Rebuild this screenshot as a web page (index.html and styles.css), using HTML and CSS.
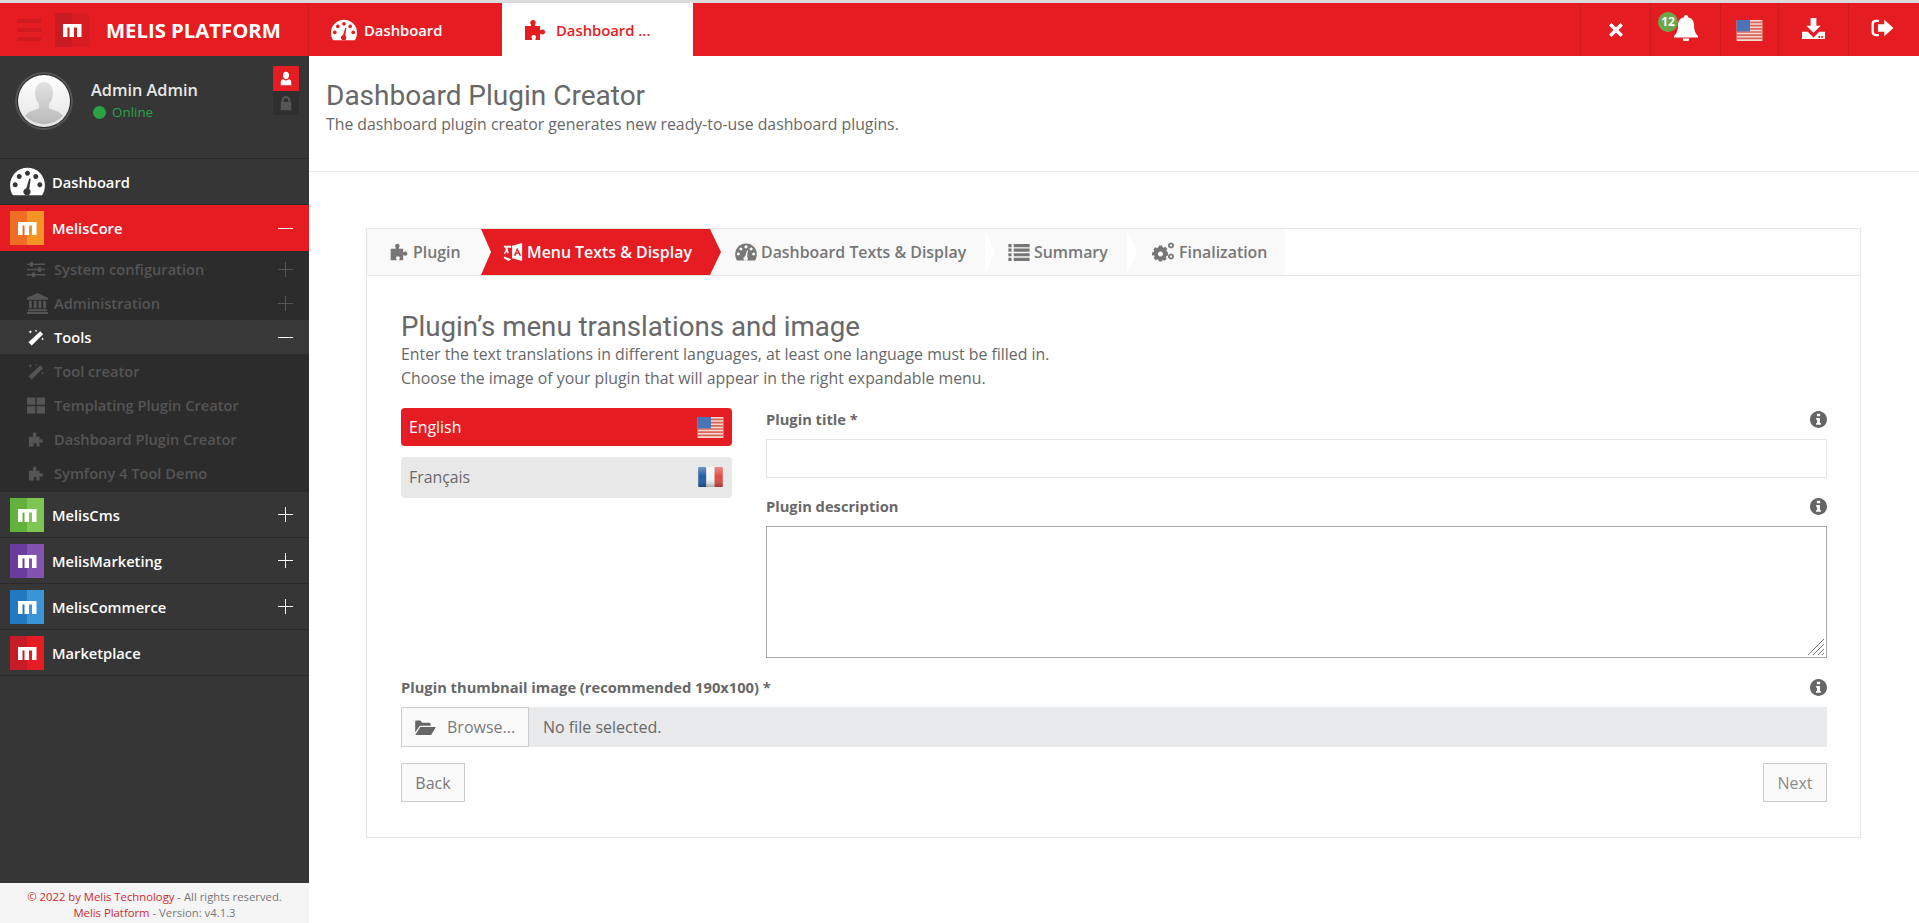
FILE: index.html
```html
<!DOCTYPE html>
<html lang="en">
<head>
  <meta charset="UTF-8" />
  <title>Melis Platform</title>
  <link rel="stylesheet" href="styles.css">
</head>
<body>

  <!-- Icon set -->
  <svg class="icon-defs" aria-hidden="true">
    <defs>
      <linearGradient id="flag-gloss" x1="0" y1="0" x2="0" y2="1">
        <stop offset="0" stop-color="#fff" stop-opacity=".35"/>
        <stop offset=".5" stop-color="#fff" stop-opacity="0"/>
        <stop offset="1" stop-color="#000" stop-opacity=".3"/>
      </linearGradient>
    </defs>
    <symbol id="i-gauge" viewBox="0 0 24 20">
      <path fill-rule="evenodd" d="M2 19.500C.7 17.600 0 15 0 12.500a12 12 0 0 1 24 0c0 2.500-.7 5.100-2 7zM12 2.600a1.700 1.700 0 1 0 .01 0zM6.300 4.900a1.700 1.700 0 1 0 .01 0zM17.700 4.900a1.700 1.700 0 1 0 .01 0zM3.500 10.500a1.700 1.700 0 1 0 .01 0zM20.500 10.500a1.700 1.700 0 1 0 .01 0zM13.200 8l-2 6.700a2.500 2.500 0 1 0 2 .5l1-7z"/>
    </symbol>
    <symbol id="i-puzzle" viewBox="0 0 24 24">
      <path d="M2 8h6V6.500C6.800 5 7 2 10 2s3.200 3 2 4.500V8h5v4.500c1.500-1.500 5-1.500 5 1.500s-3.500 3-5 1.500V22h-4.500v-1.500c1-1.500.5-3.500-1.700-3.500s-3 2-1.800 3.500V22H2z"/>
    </symbol>
    <symbol id="i-melis" viewBox="0 0 34 34">
      <path d="M8 11h18.500v13h-4.500v-9.500h-3V24h-4.500v-9.500h-2V24H8z"/>
    </symbol>
    <symbol id="i-times" viewBox="0 0 16 16">
      <path d="M3.500 1L8 5.500 12.500 1 15 3.500 10.500 8l4.500 4.500-2.500 2.500L8 10.500 3.500 15 1 12.500 5.500 8 1 3.500z"/>
    </symbol>
    <symbol id="i-bell" viewBox="0 0 24 26">
      <path d="M12 0a2 2 0 0 1 2 2.200c4 .9 6 4 6 8 0 5 1.200 8.300 4 10.800v1.500H0V21c2.800-2.500 4-5.800 4-10.800 0-4 2-7.100 6-8A2 2 0 0 1 12 0zM8.800 23.500h6.400a3.200 3.200 0 0 1-6.400 0z"/>
    </symbol>
    <symbol id="i-download" viewBox="0 0 24 24">
      <path fill-rule="evenodd" d="M9 1h6v8h4.500L12 16.500 4.500 9H9zM0 15.500h6l6 6 6-6h6V23H0zM18 19.800a1 1 0 1 0 .01 0zM21 19.800a1 1 0 1 0 .01 0z"/>
    </symbol>
    <symbol id="i-logout" viewBox="0 0 24 22">
      <path d="M8 2v2.500H5A2.500 2.500 0 0 0 2.500 7v8A2.500 2.500 0 0 0 5 17.500h3V20H4.500A4.500 4.500 0 0 1 0 15.500v-9A4.500 4.500 0 0 1 4.500 2zM14 2l10 9-10 9v-5H7V7h7z"/>
    </symbol>
    <symbol id="i-user" viewBox="0 0 16 20">
      <path d="M8 1c2.500 0 4 2 4 4.500S10.500 11 8 11 4 8 4 5.500 5.500 1 8 1zM4 11c1 1 2.500 1.500 4 1.500s3-.5 4-1.500c2 .3 3 2 3 5v3H1v-3c0-3 1-4.700 3-5z"/>
    </symbol>
    <symbol id="i-lock" viewBox="0 0 16 20">
      <path fill-rule="evenodd" d="M2 8V6a6 6 0 0 1 12 0v2h1v11H1V8zM5 8h6V6a3 3 0 0 0-6 0z"/>
    </symbol>
    <symbol id="i-sliders" viewBox="0 0 18 16">
      <path d="M0 2h3V.500h3V2h12v1.500H6V5H3V3.500H0zM0 7.300h11V5.800h3v1.500h4v1.500h-4v1.500h-3V8.800H0zM0 12.500h5V11h3v1.500h10V14H8v1.500H5V14H0z"/>
    </symbol>
    <symbol id="i-bank" viewBox="0 0 22 22">
      <path d="M11 0l11 5v2H0V5zM2 8h3v8H2zM7 8h3v8H7zM12 8h3v8h-3zM17 8h3v8h-3zM1 17h20v2H1zM0 20h22v2H0z"/>
    </symbol>
    <symbol id="i-wand" viewBox="0 0 18 18">
      <path d="M13.500 2.500l3 3L4.500 17.500l-3.500-3.500zM3 1l.6 1.400L5 3l-1.400.6L3 5l-.6-1.400L1 3l1.400-.6zM9 .500l.5 1 1 .5-1 .5-.5 1-.5-1-1-.5 1-.5zM16 9l.5 1 1 .5-1 .5-.5 1-.5-1-1-.5 1-.5z"/>
    </symbol>
    <symbol id="i-grid" viewBox="0 0 18 16">
      <path d="M0 0h8.300v7.300H0zM9.700 0H18v7.300H9.700zM0 8.700h8.300V16H0zM9.700 8.700H18V16H9.700z"/>
    </symbol>
    <symbol id="i-translate" viewBox="0 0 22 22">
      <path fill-rule="evenodd" d="M10 4l11-3v20l-11-3zM15.500 6l-3.500 9h2l.7-2h2.600l.7 2h2zM15.500 9l.8 2.500h-1.600zM1 4l8 0v2.500L5 6c0 2 .5 4 1.500 5.500L5 13c-.6-.8-1-1.700-1.300-2.500L2 13.500 1 12.500 3 9c-.2-1-.3-2-.3-3H1zM1 16l8 3-3 2-5-3z"/>
    </symbol>
    <symbol id="i-list" viewBox="0 0 20 16">
      <path d="M0 0h3v3H0zM5 0h15v3H5zM0 4.300h3v3H0zM5 4.300h15v3H5zM0 8.600h3v3H0zM5 8.600h15v3H5zM0 13h3v3H0zM5 13h15v3H5z"/>
    </symbol>
    <symbol id="i-cogs" viewBox="-1 1 23 19">
      <path fill-rule="evenodd" d="M6 4h3l.4 1.600 1.500.6 1.400-.9 2 2-.9 1.400.6 1.500L15 11v3l-1.600.4-.6 1.500.9 1.400-2 2-1.400-.9-1.500.6L9 20H6l-.4-1.600-1.500-.6-1.400.9-2-2 .9-1.400-.6-1.500L-1 14v-3l1.600-.4.6-1.500-.9-1.400 2-2 1.400.9 1.500-.6zM7.500 10a2.500 2.500 0 1 0 .01 0zM18 1a3 3 0 1 1-.01 0zM18 2.800a1.200 1.200 0 1 0 .01 0zM18 12a3 3 0 1 1-.01 0zM18 13.800a1.200 1.200 0 1 0 .01 0z"/>
    </symbol>
    <symbol id="i-folder" viewBox="0 0 22 16">
      <path d="M0 2a1.500 1.500 0 0 1 1.500-1.500h4L7.500 3H15a1.500 1.500 0 0 1 1.500 1.500V6H5L0 13zM5.500 7.500H22L17 16H0z"/>
    </symbol>
    <symbol id="i-info" viewBox="0 0 18 18">
      <path fill-rule="evenodd" d="M9 0a9 9 0 1 1-.01 0zM7.300 3v2.500h3.400V3zM6.500 7.300v1.900h1v3.400h-1v2h5v-2h-1V7.300z"/>
    </symbol>
    <symbol id="i-us" viewBox="0 0 27 22">
      <rect width="27" height="22" fill="#f4d9d0"/>
      <path d="M0 1.700h27v1.700H0zM0 5h27v1.700H0zM0 8.400h27v1.700H0zM0 11.700h27v1.700H0zM0 15h27v1.700H0zM0 18.400h27v1.700H0z" fill="#d9655a"/>
      <rect width="14" height="12" fill="#4a73b8"/>
    </symbol>
    <symbol id="i-fr" viewBox="0 0 27 22">
      <rect width="9" height="22" rx="1" fill="#1f5aa6"/>
      <rect x="9" width="9" height="22" fill="#f4f4f4"/>
      <rect x="18" width="9" height="22" rx="1" fill="#de4a42"/>
      <rect width="27" height="22" rx="1" fill="url(#flag-gloss)"/>
    </symbol>
  </svg>

  <div class="top-line"></div>

  <header class="topbar">
    <div class="brand">
      <div class="burger"><span></span><span></span><span></span></div>
      <div class="brand-logo"><svg class="melis-m"><use href="#i-melis"/></svg></div>
      <div class="brand-name">MELIS PLATFORM</div>
    </div>
    <nav class="open-tabs">
      <a class="open-tab"><svg class="ic-gauge"><use href="#i-gauge"/></svg>Dashboard</a>
      <a class="open-tab active"><svg class="ic-puzzle"><use href="#i-puzzle"/></svg>Dashboard ...</a>
    </nav>
    <div class="top-actions">
      <div class="top-action close"><svg class="ic-times"><use href="#i-times"/></svg></div>
      <div class="top-action bell">
        <span class="bell-count">12</span>
        <svg class="ic-bell"><use href="#i-bell"/></svg>
      </div>
      <div class="top-action flag"><svg class="ic-flag-top"><use href="#i-us"/></svg></div>
      <div class="top-action dl"><svg class="ic-download"><use href="#i-download"/></svg></div>
      <div class="top-action out"><svg class="ic-logout"><use href="#i-logout"/></svg></div>
    </div>
  </header>

  <div class="layout">
    <aside class="sidebar">
      <div class="profile">
        <div class="avatar">
          <svg viewBox="0 0 52 52">
            <defs>
              <linearGradient id="avatar-bg" x1="0" y1="0" x2="0" y2="1">
                <stop offset="0" stop-color="#ffffff"/>
                <stop offset="1" stop-color="#e4e4e4"/>
              </linearGradient>
              <linearGradient id="avatar-fg" x1="0" y1="0" x2="0" y2="1">
                <stop offset="0" stop-color="#e2e2e2"/>
                <stop offset="1" stop-color="#b9b9b9"/>
              </linearGradient>
            </defs>
            <circle cx="26" cy="26" r="26" fill="url(#avatar-bg)"/>
            <path d="M26 7c6 0 9 5 9 11 0 5-2 9-4 11v4c3 2 11 3 14 8a26 26 0 0 1-38 0c3-5 11-6 14-8v-4c-2-2-4-6-4-11 0-6 3-11 9-11z" fill="url(#avatar-fg)"/>
          </svg>
        </div>
        <div class="profile-text">
          <div class="profile-name">Admin Admin</div>
          <div class="profile-status"><span class="status-dot"></span>Online</div>
        </div>
        <div class="profile-btns">
          <div class="profile-btn on"><svg><use href="#i-user"/></svg></div>
          <div class="profile-btn"><svg><use href="#i-lock"/></svg></div>
        </div>
      </div>

      <ul class="menu">
        <li class="menu-item">
          <span class="menu-icon dash"><svg><use href="#i-gauge"/></svg></span>
          <span class="menu-label">Dashboard</span>
        </li>
        <li class="menu-item current">
          <span class="logo-box orange"><svg class="melis-m"><use href="#i-melis"/></svg></span>
          <span class="menu-label">MelisCore</span>
          <span class="minus"></span>
        </li>
        <li class="submenu">
          <div class="sub-item"><svg class="sub-icon"><use href="#i-sliders"/></svg>System configuration<span class="plus dim"></span></div>
          <div class="sub-item"><svg class="sub-icon bank"><use href="#i-bank"/></svg>Administration<span class="plus dim"></span></div>
          <div class="sub-item open"><svg class="sub-icon"><use href="#i-wand"/></svg>Tools<span class="minus"></span></div>
          <div class="sub-item"><svg class="sub-icon"><use href="#i-wand"/></svg>Tool creator</div>
          <div class="sub-item"><svg class="sub-icon"><use href="#i-grid"/></svg>Templating Plugin Creator</div>
          <div class="sub-item"><svg class="sub-icon"><use href="#i-puzzle"/></svg>Dashboard Plugin Creator</div>
          <div class="sub-item"><svg class="sub-icon"><use href="#i-puzzle"/></svg>Symfony 4 Tool Demo</div>
        </li>
        <li class="menu-item">
          <span class="logo-box green"><svg class="melis-m"><use href="#i-melis"/></svg></span>
          <span class="menu-label">MelisCms</span>
          <span class="plus"></span>
        </li>
        <li class="menu-item">
          <span class="logo-box purple"><svg class="melis-m"><use href="#i-melis"/></svg></span>
          <span class="menu-label">MelisMarketing</span>
          <span class="plus"></span>
        </li>
        <li class="menu-item">
          <span class="logo-box blue"><svg class="melis-m"><use href="#i-melis"/></svg></span>
          <span class="menu-label">MelisCommerce</span>
          <span class="plus"></span>
        </li>
        <li class="menu-item">
          <span class="logo-box red"><svg class="melis-m"><use href="#i-melis"/></svg></span>
          <span class="menu-label">Marketplace</span>
        </li>
      </ul>

      <footer class="side-footer">
        <div><a>&copy; 2022 by Melis Technology</a> - All rights reserved.</div>
        <div><a>Melis Platform</a> - Version: v4.1.3</div>
      </footer>
    </aside>

    <main class="content">
      <div class="page-head">
        <h1>Dashboard Plugin Creator</h1>
        <p>The dashboard plugin creator generates new ready-to-use dashboard plugins.</p>
      </div>

      <section class="wizard">
        <div class="steps">
          <div class="step first"><svg class="step-puzzle"><use href="#i-puzzle"/></svg>Plugin</div>
          <div class="step active"><svg class="step-translate"><use href="#i-translate"/></svg>Menu Texts &amp; Display</div>
          <div class="step after-active"><svg class="step-gauge"><use href="#i-gauge"/></svg>Dashboard Texts &amp; Display</div>
          <div class="step summary"><svg class="step-list"><use href="#i-list"/></svg>Summary</div>
          <div class="step final"><svg class="step-cogs"><use href="#i-cogs"/></svg>Finalization</div>
        </div>

        <div class="wizard-body">
          <h2>Plugin’s menu translations and image</h2>
          <p class="lead">Enter the text translations in different languages, at least one language must be filled in.</p>
          <p class="lead">Choose the image of your plugin that will appear in the right expandable menu.</p>

          <div class="form-row">
            <div class="langs">
              <div class="lang on">English<svg><use href="#i-us"/></svg></div>
              <div class="lang">Français<svg class="fr"><use href="#i-fr"/></svg></div>
            </div>
            <div class="fields">
              <div class="label-row">
                <label>Plugin title *</label>
                <svg class="ic-info"><use href="#i-info"/></svg>
              </div>
              <input class="text-input" type="text">
              <div class="label-row second">
                <label>Plugin description</label>
                <svg class="ic-info"><use href="#i-info"/></svg>
              </div>
              <div class="area-wrap">
                <textarea class="text-area"></textarea>
                <svg class="grip" viewBox="0 0 18 18"><path d="M1 17L17 1M6 17L17 6M11 17l6-6M15 17l2-2"/></svg>
              </div>
            </div>
          </div>

          <div class="label-row third">
            <label>Plugin thumbnail image (recommended 190x100) *</label>
            <svg class="ic-info"><use href="#i-info"/></svg>
          </div>
          <div class="file-input">
            <div class="browse"><svg><use href="#i-folder"/></svg>Browse...</div>
            <div class="file-name">No file selected.</div>
          </div>

          <div class="wizard-nav">
            <button class="nav-btn">Back</button>
            <button class="nav-btn light">Next</button>
          </div>
        </div>
      </section>
    </main>
  </div>

</body>
</html>
```

FILE: styles.css
```css
* {
  box-sizing: border-box;
}

html, body {
  margin: 0;
  height: 923px;
  overflow: hidden;
}

body {
  font-family: "Open Sans", sans-serif;
  font-size: 14px;
  color: #686868;
  background: #fff;
}

.icon-defs {
  position: absolute;
  width: 0;
  height: 0;
}

svg {
  fill: currentColor;
  display: block;
  flex: none;
}

ul {
  list-style: none;
  margin: 0;
  padding: 0;
}

.top-line {
  height: 3px;
  background: #dcdcdc;
}

/* Top bar */
.topbar {
  height: 53px;
  display: flex;
  background: #e61c23;
  color: #fff;
}

.brand {
  width: 309px;
  display: flex;
  align-items: center;
  border-right: 1px solid #cf1a20;
}

.burger {
  width: 24px;
  margin-left: 17px;
  display: flex;
  flex-direction: column;
  gap: 5px;
}

.burger span {
  height: 4px;
  background: #cf1a20;
}

.brand-logo {
  width: 34px;
  height: 34px;
  margin-left: 14px;
  background: linear-gradient(90deg, #c81c22 50%, #d71c22 50%);
}

.melis-m {
  width: 34px;
  height: 34px;
  color: #fff;
}

.brand-name {
  margin-left: 17px;
  font-size: 20.3px;
  font-weight: 700;
  white-space: nowrap;
}

.open-tabs {
  display: flex;
}

.open-tab {
  display: flex;
  align-items: center;
  width: 193px;
  padding-left: 22px;
  font-weight: 600;
  font-size: 14.8px;
  gap: 7px;
}

.open-tab.active {
  width: 191px;
  background: #fff;
  color: #e61c23;
  padding-left: 21px;
  gap: 9px;
}

.ic-gauge {
  width: 26px;
  height: 22px;
}

.ic-puzzle {
  width: 24px;
  height: 24px;
}

.top-actions {
  margin-left: auto;
  display: flex;
}

.top-action {
  position: relative;
  height: 53px;
  display: flex;
  align-items: center;
  justify-content: center;
  border-left: 1px solid #cf1a20;
}

.top-action.close { width: 70px; }
.top-action.bell { width: 70px; }
.top-action.flag { width: 58px; }
.top-action.dl { width: 70px; }
.top-action.out { width: 71px; }

.ic-times { width: 16px; height: 16px; }
.ic-bell { width: 24px; height: 26px; margin-top: -3px; }
.ic-flag-top { width: 27px; height: 21px; margin-top: 2px; }
.ic-download { width: 23px; height: 23px; margin-top: -3px; }
.ic-logout { width: 23px; height: 20px; margin-top: -3px; margin-right: 4px; }

.bell-count {
  position: absolute;
  left: 7px;
  top: 9px;
  width: 20px;
  height: 20px;
  border-radius: 50%;
  background: #6aa84a;
  color: #fff;
  font-size: 12px;
  font-weight: 700;
  line-height: 20px;
  text-align: center;
}

/* Sidebar */
.layout {
  display: flex;
  height: 867px;
}

.sidebar {
  width: 309px;
  flex: none;
  display: flex;
  flex-direction: column;
  background: #363636;
  color: #fff;
}

.profile {
  height: 103px;
  display: flex;
  border-bottom: 1px solid #2b2b2b;
}

.avatar {
  width: 58px;
  height: 58px;
  margin: 16px 0 0 15px;
  padding: 3px;
  border-radius: 50%;
  background: #2b2b2b;
  box-shadow: inset 0 0 0 2px #555;
}

.profile-text {
  margin: 23px 0 0 18px;
}

.profile-name {
  font-size: 16.3px;
  font-weight: 600;
  color: #e8e8e8;
  line-height: 22px;
}

.profile-status {
  display: flex;
  align-items: center;
  gap: 6px;
  margin: 0 0 0 2px;
  font-size: 13.4px;
  color: #2aa345;
  line-height: 22px;
}

.status-dot {
  width: 13px;
  height: 13px;
  border-radius: 50%;
  background: #2aa345;
}

.profile-btns {
  margin: 10px 10px 0 auto;
  width: 26px;
  height: 49px;
  background: #2f2f2f;
}

.profile-btn {
  height: 24px;
  display: flex;
  align-items: center;
  justify-content: center;
  color: #555;
}

.profile-btn.on {
  height: 25px;
  background: #e61c23;
  color: #fff;
}

.profile-btn svg {
  width: 12px;
  height: 15px;
}

.menu {
  flex: 1;
}

.menu-item {
  height: 46px;
  display: flex;
  align-items: center;
  padding-left: 10px;
  font-weight: 600;
  font-size: 14.7px;
  color: #fff;
  border-bottom: 1px solid #2b2b2b;
}

.menu-item.current {
  background: #e61c23;
  border-bottom: 0;
}

.menu-icon.dash svg {
  width: 35px;
  height: 29px;
}

.logo-box {
  width: 34px;
  height: 34px;
}

.logo-box.orange { background: linear-gradient(90deg, #ee6f24 50%, #f59424 50%); }
.logo-box.green { background: linear-gradient(90deg, #63b23c 50%, #7fc553 50%); }
.logo-box.purple { background: linear-gradient(90deg, #6a3c9c 50%, #8254b0 50%); }
.logo-box.blue { background: linear-gradient(90deg, #2179c1 50%, #3a94d8 50%); }
.logo-box.red { background: linear-gradient(90deg, #c51c25 50%, #e61c23 50%); }

.menu-label {
  margin-left: 8px;
  flex: 1;
}

.menu-icon + .menu-label {
  margin-left: 7px;
}

.plus, .minus {
  position: relative;
  width: 15px;
  height: 15px;
  margin-right: 16px;
  flex: none;
}

.plus::before, .minus::before {
  content: "";
  position: absolute;
  left: 0;
  right: 0;
  top: 7px;
  height: 1px;
  background: #fff;
}

.plus::after {
  content: "";
  position: absolute;
  top: 0;
  bottom: 0;
  left: 7px;
  width: 1px;
  background: #fff;
}

.plus.dim::before, .plus.dim::after {
  background: #555;
}

.submenu {
  height: 241px;
  padding-top: 1px;
  background: #2c2c2c;
}

.sub-item {
  height: 34px;
  display: flex;
  align-items: center;
  padding-left: 27px;
  font-size: 14.65px;
  font-weight: 600;
  color: #555;
}

.sub-item.open {
  background: #383838;
  color: #fff;
}

.sub-item .plus, .sub-item .minus {
  margin-left: auto;
}

.sub-icon {
  width: 18px;
  height: 17px;
  margin-right: 9px;
}

.sub-icon.bank {
  width: 21px;
  height: 21px;
  margin-right: 6px;
}

.side-footer {
  height: 40px;
  background: #f5f5f5;
  color: #777;
  font-size: 11.3px;
  line-height: 16px;
  text-align: center;
  padding-top: 6px;
}

.side-footer a {
  color: #cf2a2f;
}

/* Page */
.content {
  flex: 1;
  min-width: 0;
}

.page-head {
  height: 116px;
  padding: 24px 0 0 17px;
  border-bottom: 1px solid #ececec;
}

.page-head h1 {
  margin: 0;
  font-family: Roboto, sans-serif;
  font-size: 28px;
  font-weight: 400;
  line-height: 32px;
  color: #686868;
}

.page-head p {
  margin: 0;
  font-size: 15.8px;
  line-height: 24px;
}

.wizard {
  margin: 56px 58px 0 57px;
  height: 610px;
  border: 1px solid #e6e6e6;
}

.steps {
  display: flex;
  height: 47px;
  border-bottom: 1px solid #e6e6e6;
}

.step {
  position: relative;
  display: flex;
  align-items: center;
  height: 46px;
  padding: 0 0 0 21px;
  background: #f9f9f9;
  font-size: 15.9px;
  font-weight: 600;
  color: #777;
  gap: 4px;
  white-space: nowrap;
}

.step::after {
  content: "";
  position: absolute;
  top: 0;
  right: -10px;
  width: 10px;
  height: 46px;
  background: #fff;
  clip-path: polygon(0 0, 100% 50%, 0 100%);
  z-index: 1;
}

.step.first {
  width: 114px;
  padding-left: 22px;
}

.step.first::after, .step.final::after {
  display: none;
}

.step.active {
  width: 240px;
  padding-left: 22px;
  background: #e61c23;
  color: #fff;
  clip-path: polygon(0 0, 229px 0, 100% 50%, 229px 100%, 0 100%, 10px 50%);
  z-index: 2;
}

.step.active::after {
  display: none;
}

.step.after-active {
  width: 274px;
  margin-left: -10px;
  padding-left: 24px;
}

.step.summary {
  width: 142px;
  padding-left: 23px;
}

.step.final {
  width: 158px;
  padding-left: 25px;
}

.step-puzzle { width: 20px; height: 20px; }
.step-translate { width: 20px; height: 20px; }
.step-gauge { width: 22px; height: 18px; }
.step-list { width: 22px; height: 17px; }
.step-cogs { width: 23px; height: 20px; }

.wizard-body {
  padding: 35px 33px 0 34px;
}

.wizard-body h2 {
  margin: 0;
  font-family: Roboto, sans-serif;
  font-size: 27.7px;
  font-weight: 400;
  line-height: 31px;
  color: #686868;
}

.lead {
  margin: 0;
  font-size: 15.85px;
  line-height: 24px;
}

.form-row {
  display: flex;
  gap: 34px;
  margin-top: 18px;
}

.langs {
  width: 331px;
  flex: none;
}

.lang {
  display: flex;
  align-items: center;
  justify-content: space-between;
  height: 41px;
  padding: 0 8px 2px;
  background: #e9e8e9;
  border-radius: 4px;
  font-size: 15.85px;
}

.lang.on {
  height: 38px;
  margin-bottom: 11px;
  padding-bottom: 0;
  background: #e61c23;
  color: #fff;
}

.lang svg {
  width: 27px;
  height: 21px;
}

.lang svg.fr {
  width: 25px;
  height: 20px;
  margin-right: 1px;
}

.fields {
  flex: 1;
}

.label-row {
  display: flex;
  align-items: center;
  justify-content: space-between;
  height: 22px;
  font-size: 14.7px;
  font-weight: 700;
}

.ic-info {
  width: 17px;
  height: 17px;
  color: #666;
}

.text-input {
  display: block;
  width: 100%;
  height: 39px;
  margin-top: 9px;
  border: 1px solid #e6e6e6;
  background: #fff;
}

.label-row.second {
  margin-top: 17px;
}

.area-wrap {
  position: relative;
  margin-top: 9px;
}

.text-area {
  display: block;
  width: 100%;
  height: 132px;
  border: 1px solid #a9a9a9;
  background: #fff;
  resize: none;
}

.grip {
  position: absolute;
  right: 2px;
  bottom: 2px;
  width: 18px;
  height: 18px;
  fill: none;
  stroke: #777;
  stroke-width: 1;
}

.label-row.third {
  margin-top: 18px;
}

.file-input {
  display: flex;
  height: 40px;
  margin-top: 9px;
  background: #e8eaec;
}

.browse {
  width: 128px;
  display: flex;
  align-items: center;
  padding-left: 13px;
  gap: 11px;
  background: #fafafa;
  border: 1px solid #ccc;
  font-size: 16px;
  color: #7a7a7a;
}

.browse svg {
  width: 21px;
  height: 15px;
  color: #666;
}

.file-name {
  padding-left: 14px;
  font-size: 16px;
  line-height: 40px;
}

.wizard-nav {
  display: flex;
  justify-content: space-between;
  margin-top: 16px;
}

.nav-btn {
  width: 64px;
  height: 39px;
  padding: 0;
  background: #fafafa;
  border: 1px solid #ccc;
  font-family: "Open Sans", sans-serif;
  font-size: 16px;
  color: #777;
}

.nav-btn.light {
  color: #8c8c8c;
}
```
